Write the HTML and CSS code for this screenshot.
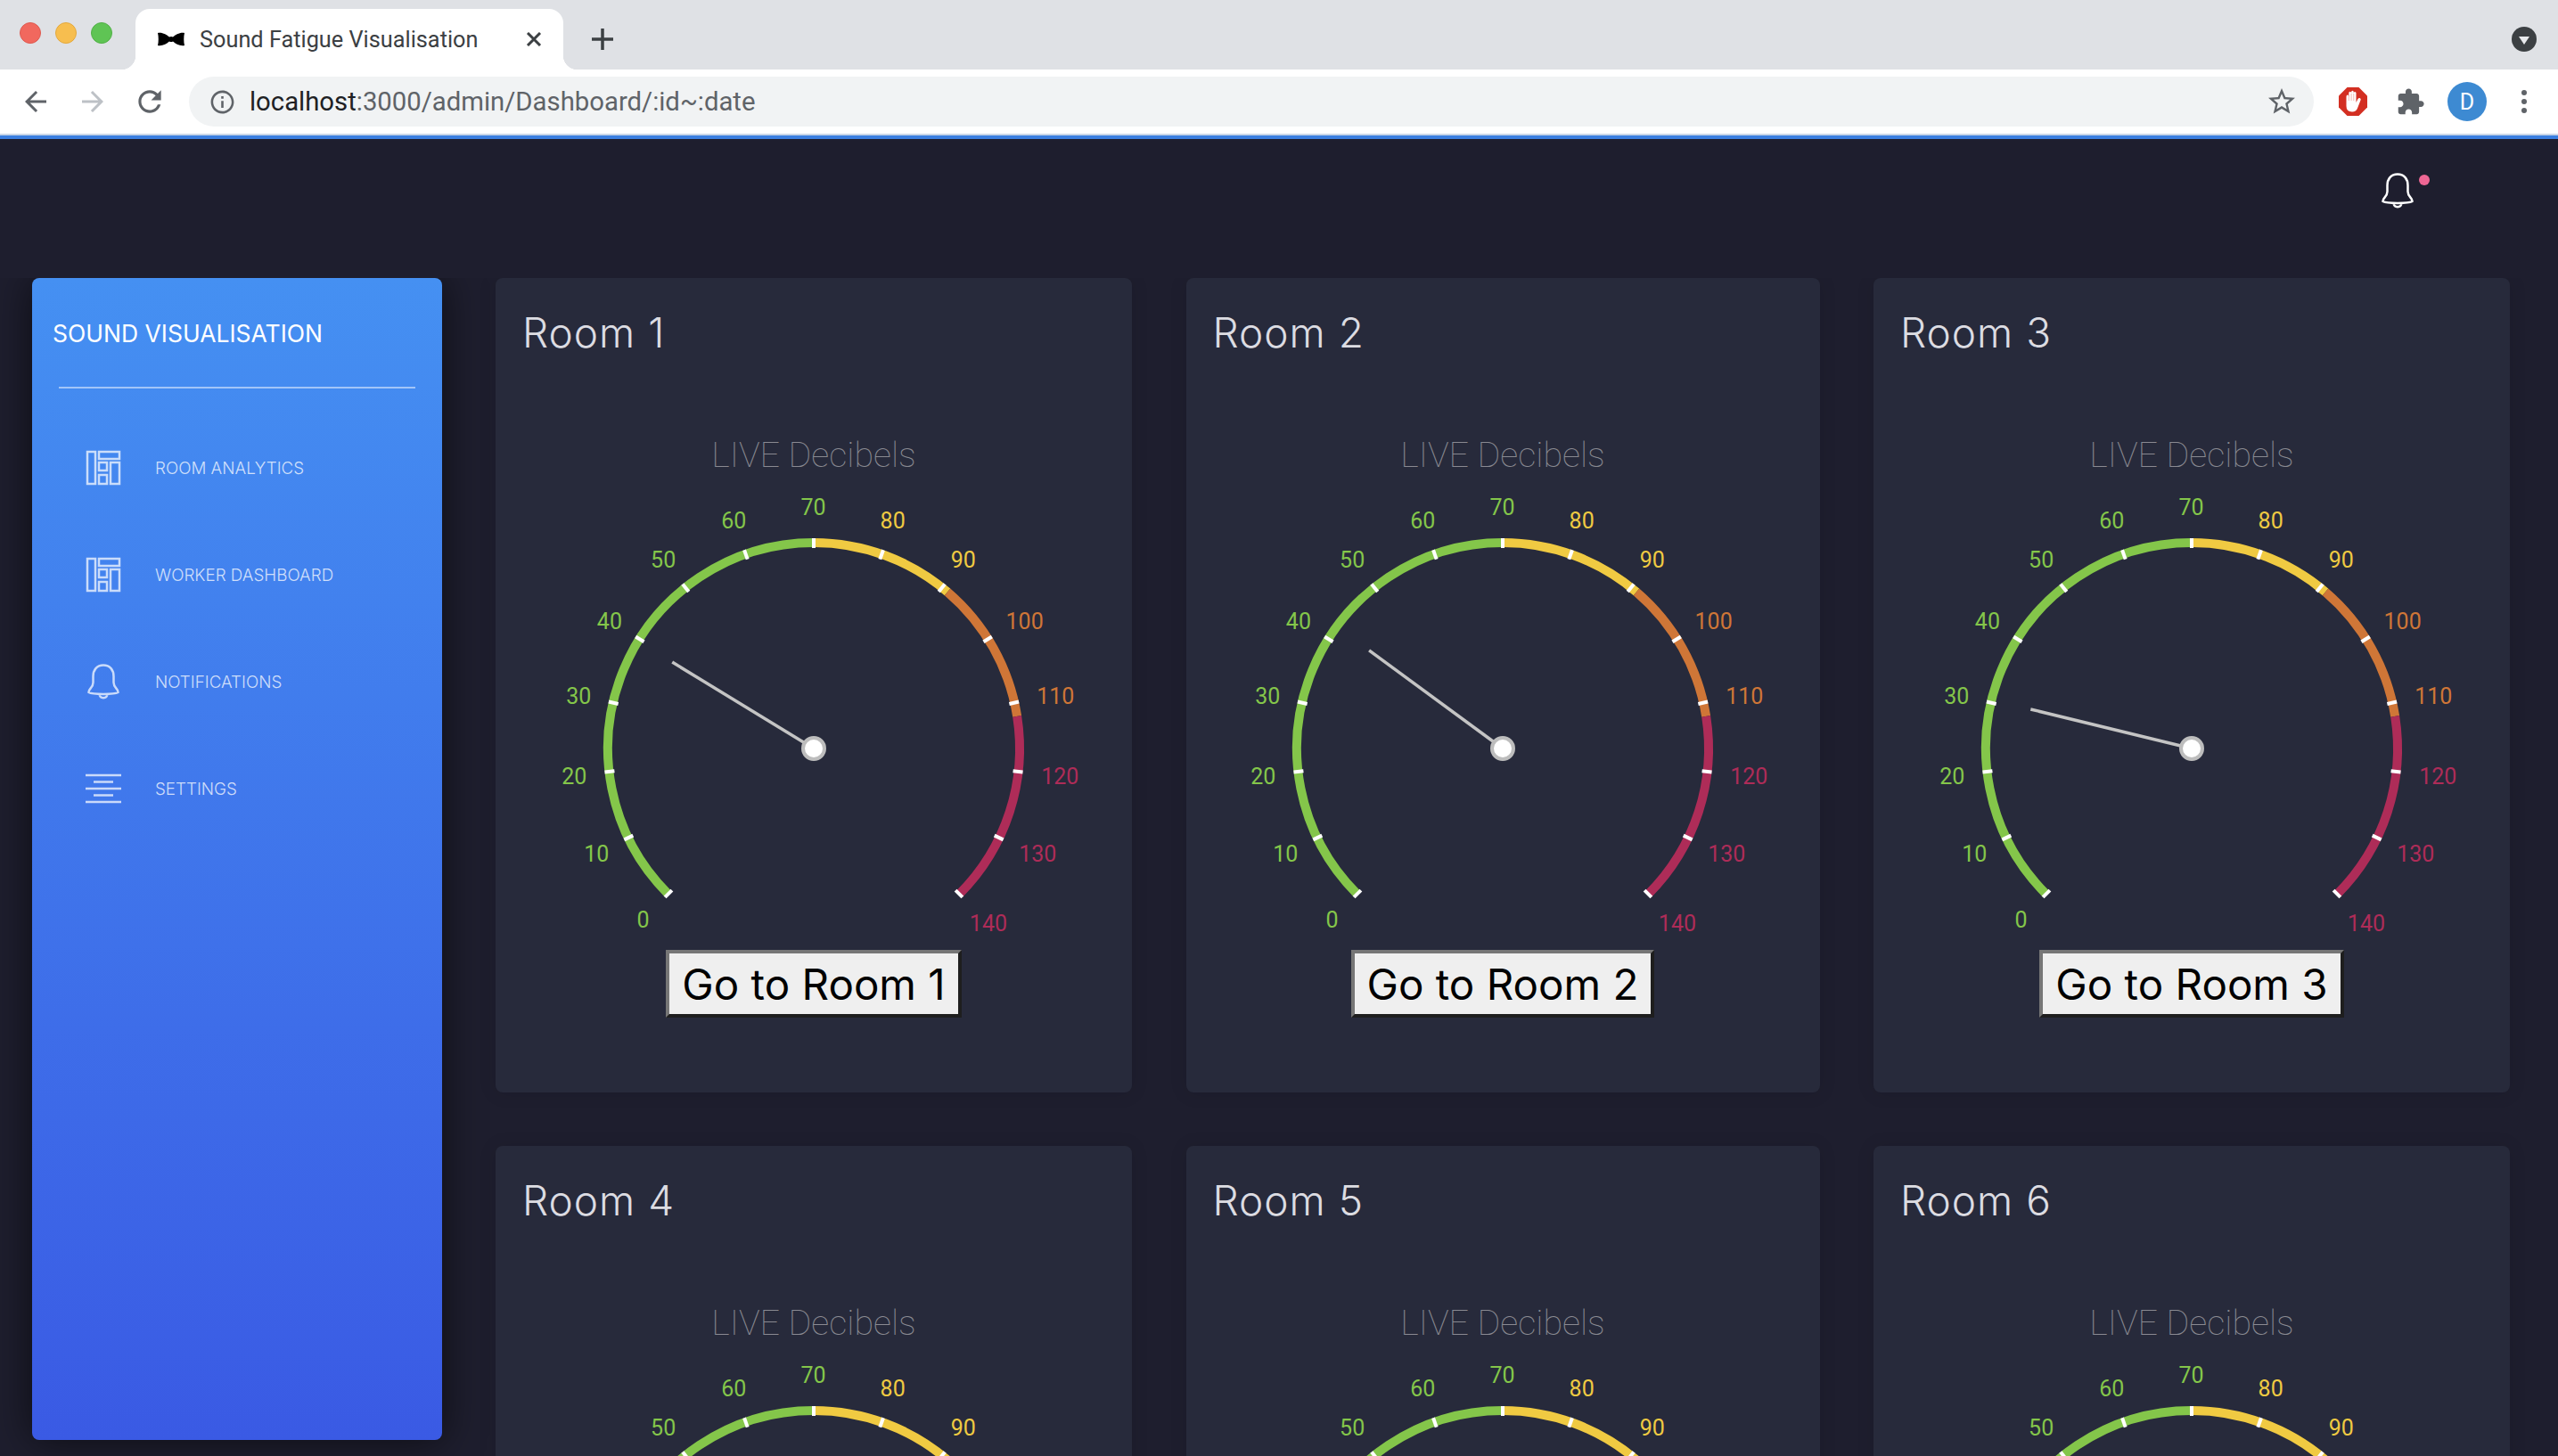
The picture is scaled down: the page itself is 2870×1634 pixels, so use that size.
FILE: index.html
```html
<!DOCTYPE html>
<html lang="en">
<head>
    <meta charset="UTF-8">
    <title>Sound Fatigue Visualisation</title>
    <link rel="stylesheet" href="styles.css">
</head>
<body>
<header class="browser">
    <div class="tabstrip">
        <div class="lights">
            <span class="light light-red"></span>
            <span class="light light-yellow"></span>
            <span class="light light-green"></span>
        </div>
        <div class="tab">
            <svg class="favicon" viewBox="0 0 30 16"><path d="M0 1C5 0 10 3 13 5.500Q15 4.500 17 5.500C20 3 25 0 30 1C29 5 29 11 30 15C25 16 20 13 17 10.500Q15 11.500 13 10.500C10 13 5 16 0 15C1 11 1 5 0 1Z"/></svg>
            <span class="tab-title">Sound Fatigue Visualisation</span>
            <svg class="tab-close" viewBox="0 0 18 16"><path d="M2 1L16 15M16 1L2 15"/></svg>
        </div>
        <svg class="new-tab" viewBox="0 0 24 24"><path d="M12 0V24M0 12H24"/></svg>
        <span class="tab-search"><span class="tab-search-arrow"></span></span>
    </div>
    <div class="toolbar">
        <span class="tool"><svg class="icon-36" viewBox="0 0 24 24"><path d="M20 11H7.830l5.590-5.590L12 4l-8 8 8 8 1.410-1.410L7.830 13H20v-2z"/></svg></span>
        <span class="tool tool-off"><svg class="icon-36" viewBox="0 0 24 24"><path d="M4 11h12.170l-5.590-5.590L12 4l8 8-8 8-1.410-1.410L16.170 13H4v-2z"/></svg></span>
        <span class="tool"><svg class="icon-38" viewBox="0 0 24 24"><path d="M17.650 6.350C16.200 4.900 14.210 4 12 4c-4.420 0-7.990 3.580-7.990 8s3.570 8 7.990 8c3.730 0 6.840-2.550 7.730-6h-2.080c-.82 2.330-3.040 4-5.650 4-3.310 0-6-2.690-6-6s2.690-6 6-6c1.660 0 3.140.69 4.220 1.780L13 11h7V4l-2.350 2.350z"/></svg></span>
        <div class="omnibox">
            <svg class="icon-31" viewBox="0 0 24 24"><path d="M11 7h2v2h-2zm0 4h2v6h-2zm1-9C6.480 2 2 6.480 2 12s4.480 10 10 10 10-4.480 10-10S17.520 2 12 2zm0 18c-4.410 0-8-3.590-8-8s3.590-8 8-8 8 3.590 8 8-3.590 8-8 8z"/></svg>
            <span class="url"><b>localhost</b>:3000/admin/Dashboard/:id~:date</span>
            <svg class="icon-36" viewBox="0 0 24 24"><path d="M22 9.240l-7.190-.62L12 2 9.190 8.630 2 9.240l5.460 4.730L5.820 21 12 17.270 18.180 21l-1.630-7.030L22 9.240zM12 15.400l-3.760 2.270 1-4.280-3.320-2.880 4.380-.38L12 6.100l1.710 4.040 4.380.38-3.320 2.880 1 4.280L12 15.400z"/></svg>
        </div>
        <span class="tool">
            <svg class="adblock" viewBox="0 0 32 32">
                <path class="adblock-stop" d="M9.500 0H22.500L32 9.500V22.500L22.500 32H9.500L0 22.500V9.500Z"/>
                <path class="adblock-hand" d="M8.500 10.500Q8.500 8.500 10 8.500Q11.300 8.500 11.300 10.500V6.500Q11.300 4.800 12.700 4.800Q14.100 4.800 14.100 6.500V5.500Q14.100 3.800 15.400 3.800Q16.800 3.800 16.800 5.500V6.500Q16.800 5 18.100 5Q19.500 5 19.500 6.500V17L21.500 13Q22.500 11.500 24 12.200Q25.200 13 24.500 14.500L21 23.500Q19.500 27.500 15 27.500Q8.500 27.500 8.500 21Z"/>
                <path class="adblock-gaps" d="M11.300 9V15M14.100 7V15M16.800 7V15"/>
            </svg>
        </span>
        <span class="tool"><svg class="icon-33" viewBox="0 0 24 24"><path d="M20.500 11H19V7c0-1.100-.9-2-2-2h-4V3.500C13 2.120 11.880 1 10.500 1S8 2.120 8 3.500V5H4c-1.100 0-1.990.9-1.990 2v3.800H3.500c1.490 0 2.700 1.210 2.700 2.700s-1.210 2.700-2.700 2.700H2V20c0 1.100.9 2 2 2h3.800v-1.500c0-1.490 1.210-2.700 2.700-2.700 1.490 0 2.700 1.210 2.700 2.700V22H17c1.100 0 2-.9 2-2v-4h1.500c1.380 0 2.500-1.120 2.500-2.500S21.880 11 20.500 11z"/></svg></span>
        <span class="tool"><span class="avatar">D</span></span>
        <span class="tool"><span class="dots"><i></i><i></i><i></i></span></span>
    </div>
</header>

<div class="page">
    <div class="topbar">
        <svg class="bell bell-top" viewBox="0 0 36 40"><path d="M18 1.500C10.500 1.500 6.500 7 6.500 14V21C6.500 27 1 28 1.500 32C6 34.500 30 34.500 34.500 32C35 28 29.500 27 29.500 21V14C29.500 7 25.500 1.500 18 1.500ZM13.500 34C14 39.500 22 39.500 22.500 34"/></svg>
        <span class="bell-dot"></span>
    </div>
    <div class="main">
        <aside class="sidebar">
            <h1 class="brand">SOUND VISUALISATION</h1>
            <div class="divider"></div>
            <ul class="menu">
                <li class="menu-item">
                    <svg class="menu-icon" viewBox="0 0 40 38"><path d="M2 1H11V37H2ZM15 1H38V9H15ZM15 13H24V22H15ZM15 27H24V37H15ZM28 13H38V37H28Z"/></svg>
                    <span>ROOM ANALYTICS</span>
                </li>
                <li class="menu-item">
                    <svg class="menu-icon" viewBox="0 0 40 38"><path d="M2 1H11V37H2ZM15 1H38V9H15ZM15 13H24V22H15ZM15 27H24V37H15ZM28 13H38V37H28Z"/></svg>
                    <span>WORKER DASHBOARD</span>
                </li>
                <li class="menu-item">
                    <svg class="menu-icon" viewBox="0 0 40 40"><path d="M20 1.500C12.500 1.500 8.500 7 8.500 14V21C8.500 27 3 28 3.500 32C8 34.500 32 34.500 36.500 32C37 28 31.500 27 31.500 21V14C31.500 7 27.500 1.500 20 1.500ZM15.500 34C16 39.500 24 39.500 24.500 34"/></svg>
                    <span>NOTIFICATIONS</span>
                </li>
                <li class="menu-item">
                    <svg class="menu-icon" viewBox="0 0 40 32"><path d="M0 1H40M9 8.500H31M0 16H40M9 23.500H31M0 31H40"/></svg>
                    <span>SETTINGS</span>
                </li>
            </ul>
        </aside>
        <section class="rooms">
            <div class="card">
                <h2 class="card-title">Room 1</h2>
                <div class="gauge" data-angle="-58.600"></div>
                <button class="room-btn">Go to Room 1</button>
            </div>
            <div class="card">
                <h2 class="card-title">Room 2</h2>
                <div class="gauge" data-angle="-53.700"></div>
                <button class="room-btn">Go to Room 2</button>
            </div>
            <div class="card">
                <h2 class="card-title">Room 3</h2>
                <div class="gauge" data-angle="-76.300"></div>
                <button class="room-btn">Go to Room 3</button>
            </div>
            <div class="card">
                <h2 class="card-title">Room 4</h2>
                <div class="gauge" data-angle="-60"></div>
            </div>
            <div class="card">
                <h2 class="card-title">Room 5</h2>
                <div class="gauge" data-angle="-60"></div>
            </div>
            <div class="card">
                <h2 class="card-title">Room 6</h2>
                <div class="gauge" data-angle="-60"></div>
            </div>
        </section>
    </div>
</div>
<script src="gauge.js"></script>
</body>
</html>
```

FILE: styles.css
```css
* {
    margin: 0;
    padding: 0;
    box-sizing: border-box;
}
html, body {
    height: 100%;
    overflow: hidden;
}
body {
    display: flex;
    flex-direction: column;
    background: #1e1e2e;
    font-family: "Inter", "Liberation Sans", sans-serif;
}
ul {
    list-style: none;
}

/* browser frame */
.browser {
    flex: none;
    background: #fff;
    border-bottom: 4px solid #3b7fe0;
}
.tabstrip {
    display: flex;
    align-items: flex-end;
    height: 78px;
    padding-left: 22px;
    padding-right: 24px;
    background: #dfe1e5;
}
.lights {
    display: flex;
    gap: 16px;
    align-self: flex-start;
    margin-top: 25px;
}
.light {
    width: 24px;
    height: 24px;
    border-radius: 50%;
}
.light-red {
    background: #f1685e;
    border: 1px solid #de5a50;
}
.light-yellow {
    background: #f7be4f;
    border: 1px solid #e3a93f;
}
.light-green {
    background: #5fc454;
    border: 1px solid #52b047;
}
.tab {
    position: relative;
    display: flex;
    align-items: center;
    width: 480px;
    height: 68px;
    margin-left: 26px;
    padding: 0 24px 0 25px;
    background: #fff;
    border-radius: 16px 16px 0 0;
}
.tab::before, .tab::after {
    content: "";
    position: absolute;
    bottom: 0;
    width: 16px;
    height: 16px;
}
.tab::before {
    left: -16px;
    background: radial-gradient(circle at 0 0, transparent 16px, #fff 16.500px);
}
.tab::after {
    right: -16px;
    background: radial-gradient(circle at 100% 0, transparent 16px, #fff 16.500px);
}
.favicon {
    width: 30px;
    height: 16px;
    fill: #000;
}
.tab-title {
    flex: 1;
    margin-left: 17px;
    font-family: "Roboto", sans-serif;
    font-size: 25.300px;
    color: #3c4043;
    white-space: nowrap;
}
.tab-close {
    width: 18px;
    height: 16px;
    fill: none;
    stroke: #3c4043;
    stroke-width: 3;
}
.new-tab {
    width: 24px;
    height: 24px;
    margin-left: 32px;
    margin-bottom: 22px;
    fill: none;
    stroke: #3c4043;
    stroke-width: 3.500;
}
.tab-search {
    display: flex;
    align-items: center;
    justify-content: center;
    width: 28px;
    height: 28px;
    margin-left: auto;
    margin-bottom: 20px;
    border-radius: 50%;
    background: #3c4043;
}
.tab-search-arrow {
    width: 0;
    height: 0;
    margin-top: 3px;
    border-left: 6px solid transparent;
    border-right: 6px solid transparent;
    border-top: 9px solid #e8eaed;
}
.toolbar {
    display: flex;
    align-items: center;
    height: 74px;
    padding: 0 6px 0 8px;
    background: #fff;
    border-bottom: 2px solid #c9d6e8;
}
.tool {
    display: flex;
    align-items: center;
    justify-content: center;
    width: 64px;
    height: 56px;
    fill: #5f6368;
}
.icon-31 {
    width: 31px;
    height: 31px;
    fill: #5f6368;
}
.icon-33 {
    width: 33px;
    height: 33px;
}
.icon-36 {
    width: 36px;
    height: 36px;
    fill: #5f6368;
}
.tool-off .icon-36 {
    fill: #bdc1c6;
}
.icon-38 {
    width: 38px;
    height: 38px;
}
.omnibox {
    display: flex;
    align-items: center;
    flex: 1;
    height: 56px;
    margin: 0 12px;
    padding: 0 18px 0 22px;
    border-radius: 28px;
    background: #f1f3f4;
}
.url {
    flex: 1;
    margin-left: 15px;
    font-family: "Roboto", sans-serif;
    font-size: 29.300px;
    color: #5f6368;
}
.url b {
    font-weight: 400;
    color: #202124;
}
.adblock {
    width: 32px;
    height: 32px;
}
.adblock-stop {
    fill: #d32f22;
}
.adblock-hand {
    fill: #fff;
}
.adblock-gaps {
    fill: none;
    stroke: #e88a80;
    stroke-width: 0.600;
}
.avatar {
    display: flex;
    align-items: center;
    justify-content: center;
    width: 44px;
    height: 44px;
    border-radius: 50%;
    background: #3d8ad2;
    font-family: "Roboto", sans-serif;
    font-size: 25px;
    color: #fff;
}
.dots {
    display: flex;
    flex-direction: column;
    gap: 4px;
}
.dots i {
    display: block;
    width: 6px;
    height: 6px;
    border-radius: 50%;
    background: #5f6368;
}

/* app */
.page {
    flex: 1;
    min-height: 0;
    overflow: hidden;
    background: #1e1e2e;
}
.topbar {
    display: flex;
    justify-content: flex-end;
    align-items: flex-start;
    height: 156px;
    padding: 38px 144px 0 0;
}
.bell {
    fill: none;
    stroke: #fff;
    stroke-width: 2.500;
}
.bell-top {
    width: 36px;
    height: 40px;
}
.bell-dot {
    width: 12px;
    height: 12px;
    margin: 2px 0 0 6px;
    border-radius: 50%;
    background: #ee6694;
}
.main {
    display: flex;
    align-items: flex-start;
    height: 1322px;
    padding-left: 36px;
    overflow: hidden;
}
.sidebar {
    flex: none;
    width: 460px;
    height: 1304px;
    padding-top: 44px;
    border-radius: 8px;
    background: linear-gradient(180deg, #4590f2 0%, #3a5ae4 100%);
    box-shadow: 0 0 45px rgba(0, 0, 0, 0.6);
}
.brand {
    padding-left: 23px;
    font-size: 26.500px;
    line-height: 36px;
    font-weight: 400;
    color: #fff;
}
.divider {
    width: 400px;
    height: 2px;
    margin: 42px 0 29px 30px;
    background: rgba(255, 255, 255, 0.5);
}
.menu-item {
    display: flex;
    align-items: center;
    gap: 38px;
    height: 120px;
    padding-left: 60px;
    font-size: 18.800px;
    font-weight: 300;
    color: rgba(255, 255, 255, 0.75);
}
.menu-icon {
    width: 40px;
    height: 40px;
    fill: none;
    stroke: rgba(255, 255, 255, 0.72);
    stroke-width: 2.500;
}
.rooms {
    display: grid;
    grid-template-columns: 714px 711px 714px;
    gap: 60px 60.500px;
    margin-left: 60px;
}
.card {
    display: flex;
    flex-direction: column;
    height: 914px;
    padding: 28px 30px 0;
    border-radius: 8px;
    background: #272a3b;
    box-shadow: 0 1px 20px rgba(0, 0, 0, 0.1);
}
.card-title {
    font-size: 46px;
    line-height: 66px;
    letter-spacing: 1px;
    font-weight: 300;
    color: #dcdce2;
}
.gauge {
    height: 660px;
}
.gauge svg {
    display: block;
    margin: 0 auto;
}
.gauge-title {
    font-family: "Roboto", sans-serif;
    font-size: 39.500px;
    font-weight: 100;
    fill: #8a8a92;
}
.gauge-label {
    font-family: "Roboto", sans-serif;
    font-size: 25px;
    font-weight: 400;
}
.room-btn {
    align-self: center;
    height: 76px;
    padding: 0 14px;
    border: 4px solid;
    border-color: #767676 #1e1e1e #1e1e1e #767676;
    background: #efefef;
    font-family: "Inter", sans-serif;
    font-size: 47.500px;
    color: #000;
}
```

FILE: gauge.js
```js
// 0-140 dB over 270 degrees
var NS = 'http://www.w3.org/2000/svg';
var CX = 320, CY = 434, R = 231;
var RANGES = [[0, 70, '#84c64a'], [70, 91, '#f0ca42'], [91, 112, '#cf7637'], [112, 140, '#ae2c58']];

function el(name, attrs, parent) {
    var node = document.createElementNS(NS, name);
    for (var k in attrs) {
        node.setAttribute(k, attrs[k]);
    }
    parent.appendChild(node);
    return node;
}
function angle(v) {
    return (v / 140 * 270 - 135) * Math.PI / 180;
}
function point(a, r) {
    return [CX + r * Math.sin(a), CY - r * Math.cos(a)];
}
function colorFor(v) {
    for (var i = 0; i < RANGES.length; i++) {
        if (v <= RANGES[i][1]) {
            return RANGES[i][2];
        }
    }
}

var gauges = document.querySelectorAll('.gauge');
for (var g = 0; g < gauges.length; g++) {
    var svg = el('svg', {width: 640, height: 660, viewBox: '0 0 640 660'}, gauges[g]);
    var gaugeTop = gauges[g].getBoundingClientRect().top;

    var title = el('text', {x: CX, y: 118, 'text-anchor': 'middle', 'class': 'gauge-title'}, svg);
    title.textContent = 'LIVE Decibels';

    for (var i = 0; i < RANGES.length; i++) {
        var p1 = point(angle(RANGES[i][0]), R);
        var p2 = point(angle(RANGES[i][1]), R);
        el('path', {
            d: 'M' + p1[0] + ' ' + p1[1] + 'A' + R + ' ' + R + ' 0 0 1 ' + p2[0] + ' ' + p2[1],
            fill: 'none',
            stroke: RANGES[i][2],
            'stroke-width': 10
        }, svg);
    }

    for (var v = 0; v <= 140; v += 10) {
        var a = angle(v);
        var t1 = point(a, 225);
        var t2 = point(a, 236);
        el('line', {x1: t1[0], y1: t1[1], x2: t2[0], y2: t2[1], stroke: '#fff', 'stroke-width': 4}, svg);

        var lp = point(a, 270);
        // labels below the fold are never seen
        if (gaugeTop + lp[1] + 8 > window.innerHeight) {
            continue;
        }
        // three digit labels sit a bit to the right, the lower ones a bit down
        var dx = v === 140 ? 5 : (v >= 100 ? 8 : -0.5);
        var dy = v === 140 ? 6 : (v < 50 || v > 90 ? 2 : 0);
        var label = el('text', {
            x: lp[0] + dx,
            y: lp[1] + 8 + dy,
            'text-anchor': 'middle',
            'class': 'gauge-label',
            fill: colorFor(v)
        }, svg);
        label.textContent = v;
    }

    var tip = point(parseFloat(gauges[g].getAttribute('data-angle')) * Math.PI / 180, 186);
    el('line', {x1: CX, y1: CY, x2: tip[0], y2: tip[1], stroke: '#c4c4c4', 'stroke-width': 3.5}, svg);
    el('circle', {cx: CX, cy: CY, r: 12, fill: '#fff', stroke: '#bdbdbd', 'stroke-width': 4}, svg);
}
```
